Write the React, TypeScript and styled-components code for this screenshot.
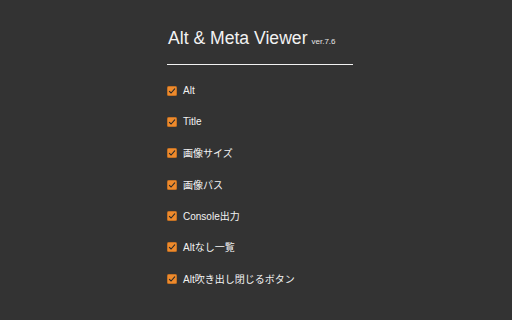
import styled, { createGlobalStyle } from 'styled-components';

const GlobalStyle = createGlobalStyle`
  html, body {
    margin: 0;
    padding: 0;
    background: #333333;
  }
  body {
    width: 512px;
    height: 320px;
    overflow: hidden;
    font-family: "Liberation Sans", "Noto Sans CJK JP", sans-serif;
    color: #f2f2f2;
  }
`;

const Page = styled.main`
  padding: 29px 0 0 167px;
`;

const Panel = styled.section`
  width: 186px;
`;

const Header = styled.header`
  display: flex;
  align-items: baseline;
  gap: 4px;
  padding: 0 0 17px 1px;
  border-bottom: 1px solid #f2f2f2;
`;

const Title = styled.h1`
  margin: 0;
  font-size: 17.6px;
  line-height: 18px;
  font-weight: 400;
`;

const Version = styled.span`
  font-size: 8px;
  color: #e6e6e6;
`;

const List = styled.ul`
  list-style: none;
  margin: 9.5px 0 0;
  padding: 0;
`;

const Row = styled.li`
  display: flex;
  align-items: center;
  gap: 6px;
  height: 31.35px;
  font-size: 10px;
  cursor: pointer;
`;

const Box = styled.span<{ checked: boolean }>`
  display: flex;
  align-items: center;
  justify-content: center;
  width: 10px;
  height: 10px;
  border-radius: 1.5px;
  background: ${({ checked }) => (checked ? '#ee8a2c' : 'transparent')};
  box-shadow: inset 0 0 0 0.5px rgba(0, 0, 0, 0.35);
  margin-top: 1px;
`;

const Label = styled.span`
  white-space: nowrap;
`;

const options = [
  'Alt',
  'Title',
  '画像サイズ',
  '画像パス',
  'Console出力',
  'Altなし一覧',
  'Alt吹き出し閉じるボタン',
];

const Check = () => (
  <svg width="8" height="8" viewBox="0 0 8 8">
    <path d="M1.4 4.3 L3.1 6 L6.7 1.8" fill="none" stroke="#2a2a2a" strokeWidth="1.1" strokeLinecap="round" strokeLinejoin="round" />
  </svg>
);

const App = () => (
  <Page>
    <GlobalStyle />
    <Panel>
      <Header>
        <Title>Alt &amp; Meta Viewer</Title>
        <Version>ver.7.6</Version>
      </Header>
      <List>
        {options.map((o) => (
          <Row key={o}>
            <Box checked>
              <Check />
            </Box>
            <Label>{o}</Label>
          </Row>
        ))}
      </List>
    </Panel>
  </Page>
);

export default App;
